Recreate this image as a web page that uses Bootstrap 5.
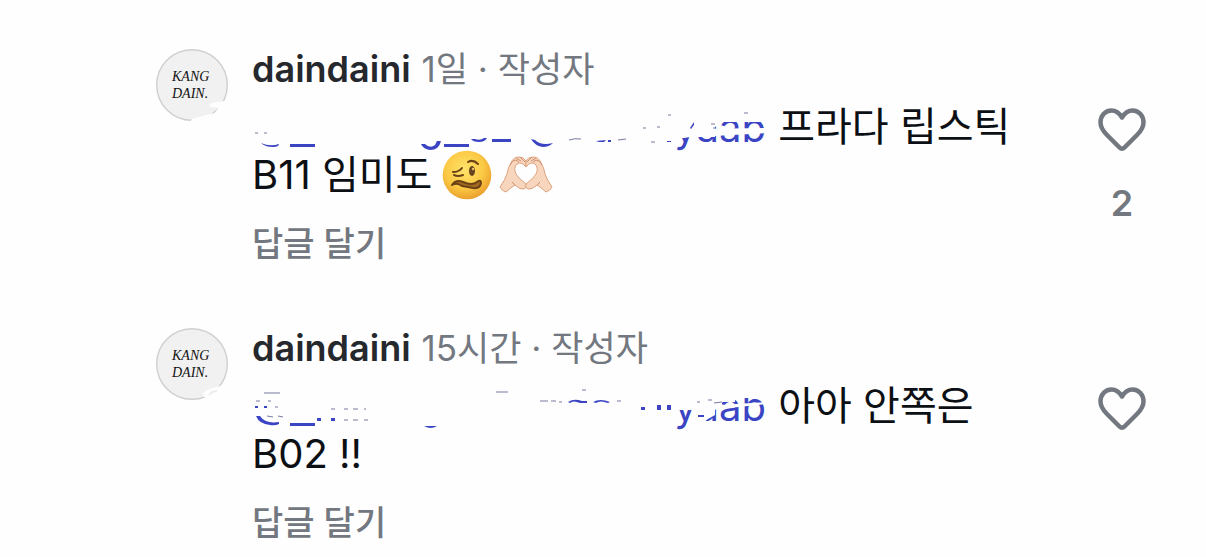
<!DOCTYPE html>
<html lang="ko">
<head>
<meta charset="utf-8">
<meta name="viewport" content="width=device-width, initial-scale=1">
<title>댓글</title>
<link href="https://cdn.jsdelivr.net/npm/bootstrap@5.3.0/dist/css/bootstrap.min.css" rel="stylesheet">
<style>
  body { font-family: Inter, "Noto Sans CJK KR", sans-serif; color: #0c1014; background: #fefefe; overflow-x: hidden; }
  .thread { padding: 45px 60px 0 156px; gap: 56px; }
  .comment { gap: 24px; }
  .avatar { width: 72px; height: 72px; margin-top: 4px; }
  .body-col { padding-right: 32px; }
  .meta { font-size: 35px; line-height: 48px; color: #737880; column-gap: 11px; margin-bottom: 10px; }
  .author { font-size: 36px; font-weight: 600; color: #25282d; }
  .message { font-size: 40px; line-height: 48px; margin-bottom: 21px; }
  .mention { display: inline-block; vertical-align: top; }
  .emoji { vertical-align: top; }
  .reply { font-size: 34px; line-height: 48px; font-weight: 500; color: #737880; }
  .like { color: #737880; width: 48px; padding-top: 63px; }
  .count { font-size: 36px; line-height: 48px; font-weight: 600; margin-top: 27px; }
  .link-ink { stroke: #3b45c4; stroke-width: 3; fill: none; }
  .link-text { fill: #3b45c4; font-size: 40px; }
</style>
</head>
<body>
<svg width="0" height="0" class="position-absolute" aria-hidden="true">
  <symbol id="heart" viewBox="0 0 48 44">
    <path d="M24 9.500C21 4.500 17.500 2.500 13.500 2.500C7 2.500 2.500 8 2.500 14.500C2.500 20 5.500 23.500 9 27L21.500 39.500Q24 42 26.500 39.500L39 27C42.500 23.500 45.500 20 45.500 14.500C45.500 8 41 2.500 34.500 2.500C30.500 2.500 27 4.500 24 9.500Z" fill="none" stroke="currentColor" stroke-width="4.500" stroke-linejoin="round"/>
  </symbol>
</svg>
<main class="thread d-flex flex-column">
  <article class="comment d-flex align-items-start">
    <svg class="avatar flex-shrink-0" viewBox="0 0 72 72" role="img" aria-label="KANG DAIN.">
      <circle cx="36" cy="36" r="35.300" fill="#f1f1f1" stroke="#cfcfcf" stroke-width="1.400"/>
      <g font-family="Liberation Serif, serif" font-style="italic" font-size="14" fill="#111"><text x="16" y="32">KANG</text><text x="16" y="49">DAIN.</text></g>
      <path d="M73 51L62 53Q50 54 55 58L62 59L59 64L50 66L36 70L34 73H73Z" fill="#fefefe"/>
    </svg>
    <div class="body-col flex-grow-1">
      <header class="meta d-flex flex-wrap"><span class="author">daindaini</span><span>1일 · 작성자</span></header>
      <p class="message"><a class="mention" href="#" aria-label="멘션"><svg class="d-block" width="515" height="48" viewBox="252 103 515 48">
        <text class="link-text" x="766" y="142" text-anchor="end">yaab</text>
        <path d="M670 103H767V122H670ZM670 122H715V137H690L684 138H670ZM715 127L722 123V122H715ZM696 129L767 128V133L696 137Z" fill="#fefefe"/>
        <path class="link-ink" d="M290 145.500H315M444 145.500H469M492 140.500H511"/>
        <path d="M261 143Q270 147 279 144Q279 147 273 147Q265 147 261 143ZM421 144L425 144Q430 149 435 145L437 141L441 141Q439 150 430 150Q423 149 421 144ZM471 139L475 139Q480 141 484 138L487 138Q485 142 479 142Q473 142 471 139ZM531 139L535 140Q541 146 553 143Q549 147 543 147Q535 146 531 139ZM596 141L606 140L604 142H599ZM608 140H611V142H608ZM667 141H671V142H667ZM690 128L694 122V125L691 129Z" fill="#3b45c4"/>
        <path d="M569 140Q575 138 581 139M618 140L626 139M643 128H646M657 127H660M668 115H671M744 113H748M255 133H258M264 133H267M651 142H655M711 124H715M713 128H715" stroke="#777b9f" fill="none"/>
      </svg></a> 프라다 립스틱 B11 임미도<svg class="emoji ms-1" width="62" height="48" viewBox="0 0 62 48" overflow="visible" role="img" aria-label="🥴">
        <defs><radialGradient id="skin" cx=".45" cy=".38" r=".65"><stop offset="0" stop-color="#ffe36b"/><stop offset=".6" stop-color="#fbc944"/><stop offset="1" stop-color="#e99b2b"/></radialGradient></defs>
        <circle cx="31" cy="24" r="24.300" fill="url(#skin)"/>
        <g fill="none" stroke="#6b4215" stroke-width="2" stroke-linecap="round" stroke-linejoin="round"><path d="M17 21Q23 21 26 17M18 24Q22 26 27 24M32 11Q37 8 42 13"/><path d="M16 34Q20 28 27 31Q36 35 41 31Q45 28 45 32Q44 38 37 37Q32 36 26 35Q21 31 16 34Z" fill="#a56a22"/></g>
        <ellipse cx="36" cy="20" rx="3" ry="5" fill="#68451e"/><circle cx="37" cy="18" r="1.200" fill="#e7bf65"/>
      </svg><svg class="emoji" width="56" height="48" viewBox="0 0 56 48" overflow="visible" role="img" aria-label="🫶🏻">
        <g id="hand"><path d="M2 36Q7 29 9 23Q10 16 13 12Q15 6 21 6Q26 6 28 10V16Q23 10 19 13Q15 17 18 23Q20 27 27 32Q30 36 26 38Q22 39 17 34L14 36L8 41Q4 40 2 36Z" fill="#f8d6bd" stroke="#dda37f" stroke-width="1"/><path d="M12 14Q14 9 18 9L21 11M18 7L23 10M22 6L27 11M14 31L17 34" fill="none" stroke="#ce8e70" stroke-width="1"/></g>
        <use href="#hand" transform="matrix(-1 0 0 1 56 0)"/>
      </svg></p>
      <button class="reply btn p-0 border-0 d-block" type="button">답글 달기</button>
    </div>
    <button class="like btn px-0 pb-0 border-0 flex-shrink-0" type="button" aria-label="좋아요 2">
      <svg class="d-block" width="48" height="44"><use href="#heart"/></svg>
      <span class="count d-block">2</span>
    </button>
  </article>
  <article class="comment d-flex align-items-start">
    <svg class="avatar flex-shrink-0" viewBox="0 0 72 72" role="img" aria-label="KANG DAIN.">
      <circle cx="36" cy="36" r="35.300" fill="#f1f1f1" stroke="#cfcfcf" stroke-width="1.400"/>
      <g font-family="Liberation Serif, serif" font-style="italic" font-size="14" fill="#111"><text x="16" y="32">KANG</text><text x="16" y="49">DAIN.</text></g>
      <path d="M68 57Q55 60 48 64Q45 68 50 70L58 73H73V57Z" fill="#fefefe"/><path d="M53 67Q56 63 61 63" fill="none" stroke="#ececec" stroke-width="2"/>
    </svg>
    <div class="body-col flex-grow-1">
      <header class="meta d-flex flex-wrap"><span class="author">daindaini</span><span>15시간 · 작성자</span></header>
      <p class="message"><a class="mention" href="#" aria-label="멘션"><svg class="d-block" width="515" height="48" viewBox="252 382 515 48">
        <text class="link-text" x="766" y="421" text-anchor="end">yaab</text>
        <path d="M670 382H767V398H735V402H722V406L715 410V415L708 419L700 425H692V410H675V404H670ZM720 405L767 402V404L720 409Z" fill="#fefefe"/>
        <path class="link-ink" d="M290 424.500H315"/>
        <path d="M256 416L260 416Q265 424 279 422V424Q275 426 270 425Q259 424 256 416ZM255 406H258V408H255ZM264 406H267V408H264ZM317 418H321V421H317ZM331 418H335V421H331ZM424 426H437Q431 430 424 426ZM568 402Q574 398 582 401H587V403H580Q573 400 570 403ZM593 402Q600 398 610 402L608 403Q600 400 596 403ZM641 407H645V410H641ZM657 405H661V410H657ZM667 405H671V410H667ZM698 415H704V417H698Z" fill="#3b45c4"/>
        <path d="M264 393H280M256 401H260M268 401H271M275 407H278M267 416L273 417M278 416L283 417M331 409H335M344 409H348M353 409H358M364 409H366M344 420H348M353 420H358M364 420H368M496 392H508M540 401H548M551 401H556M559 402H562M617 401H621M582 390H586M697 402H700M714 403L722 402M708 400H712" stroke="#777b9f" fill="none"/>
      </svg></a> 아아 안쪽은 B02 !!</p>
      <button class="reply btn p-0 border-0 d-block" type="button">답글 달기</button>
    </div>
    <button class="like btn px-0 pb-0 border-0 flex-shrink-0" type="button" aria-label="좋아요">
      <svg class="d-block" width="48" height="44"><use href="#heart"/></svg>
    </button>
  </article>
</main>
<script src="https://cdn.jsdelivr.net/npm/bootstrap@5.3.0/dist/js/bootstrap.bundle.min.js"></script>
</body>
</html>
